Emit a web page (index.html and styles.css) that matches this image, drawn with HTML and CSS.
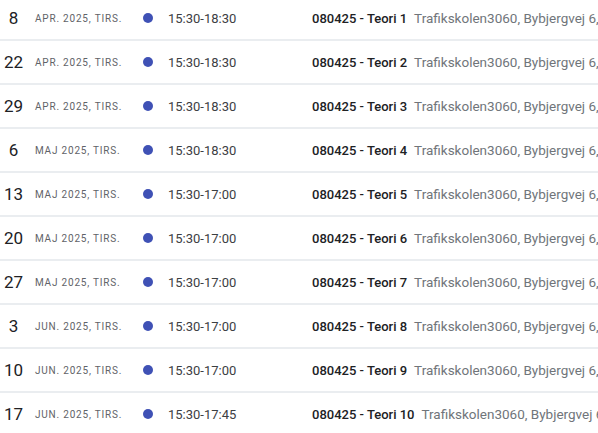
FILE: index.html
```html
<!DOCTYPE html>
<html lang="da">

<head>
    <meta charset="UTF-8">
    <meta name="viewport" content="width=device-width, initial-scale=1.0">
    <title>Agenda</title>
    <link rel="stylesheet" href="styles.css">
</head>

<body>
    <div class="agenda">
        <div class="row">
            <div class="day">8</div>
            <div class="month">Apr. 2025, tirs.</div>
            <span class="dot"></span>
            <div class="time">15:30-18:30</div>
            <div class="title">080425 - Teori 1</div>
            <div class="place">Trafikskolen3060, Bybjergvej 6, 3060 Espergærde</div>
        </div>
        <div class="row">
            <div class="day">22</div>
            <div class="month">Apr. 2025, tirs.</div>
            <span class="dot"></span>
            <div class="time">15:30-18:30</div>
            <div class="title">080425 - Teori 2</div>
            <div class="place">Trafikskolen3060, Bybjergvej 6, 3060 Espergærde</div>
        </div>
        <div class="row">
            <div class="day">29</div>
            <div class="month">Apr. 2025, tirs.</div>
            <span class="dot"></span>
            <div class="time">15:30-18:30</div>
            <div class="title">080425 - Teori 3</div>
            <div class="place">Trafikskolen3060, Bybjergvej 6, 3060 Espergærde</div>
        </div>
        <div class="row">
            <div class="day">6</div>
            <div class="month">Maj 2025, tirs.</div>
            <span class="dot"></span>
            <div class="time">15:30-18:30</div>
            <div class="title">080425 - Teori 4</div>
            <div class="place">Trafikskolen3060, Bybjergvej 6, 3060 Espergærde</div>
        </div>
        <div class="row">
            <div class="day">13</div>
            <div class="month">Maj 2025, tirs.</div>
            <span class="dot"></span>
            <div class="time">15:30-17:00</div>
            <div class="title">080425 - Teori 5</div>
            <div class="place">Trafikskolen3060, Bybjergvej 6, 3060 Espergærde</div>
        </div>
        <div class="row">
            <div class="day">20</div>
            <div class="month">Maj 2025, tirs.</div>
            <span class="dot"></span>
            <div class="time">15:30-17:00</div>
            <div class="title">080425 - Teori 6</div>
            <div class="place">Trafikskolen3060, Bybjergvej 6, 3060 Espergærde</div>
        </div>
        <div class="row">
            <div class="day">27</div>
            <div class="month">Maj 2025, tirs.</div>
            <span class="dot"></span>
            <div class="time">15:30-17:00</div>
            <div class="title">080425 - Teori 7</div>
            <div class="place">Trafikskolen3060, Bybjergvej 6, 3060 Espergærde</div>
        </div>
        <div class="row">
            <div class="day">3</div>
            <div class="month">Jun. 2025, tirs.</div>
            <span class="dot"></span>
            <div class="time">15:30-17:00</div>
            <div class="title">080425 - Teori 8</div>
            <div class="place">Trafikskolen3060, Bybjergvej 6, 3060 Espergærde</div>
        </div>
        <div class="row">
            <div class="day">10</div>
            <div class="month">Jun. 2025, tirs.</div>
            <span class="dot"></span>
            <div class="time">15:30-17:00</div>
            <div class="title">080425 - Teori 9</div>
            <div class="place">Trafikskolen3060, Bybjergvej 6, 3060 Espergærde</div>
        </div>
        <div class="row">
            <div class="day">17</div>
            <div class="month">Jun. 2025, tirs.</div>
            <span class="dot"></span>
            <div class="time">15:30-17:45</div>
            <div class="title">080425 - Teori 10</div>
            <div class="place">Trafikskolen3060, Bybjergvej 6, 3060 Espergærde</div>
        </div>
    </div>
</body>

</html>
```

FILE: styles.css
```css
body {
    font-family: Roboto, 'Liberation Sans', sans-serif;
    background: #ffffff;
    color: #3c4043;
    margin: 0;
    padding: 0;
    overflow: hidden;
}

.agenda {
    margin-top: -3px;
}

.row {
    display: flex;
    align-items: center;
    height: 42px;
    border-bottom: 2px solid #eaedf0;
    white-space: nowrap;
    overflow: hidden;
}

.day {
    width: 27px;
    text-align: center;
    font-size: 17px;
    color: #202124;
    flex-shrink: 0;
}

.month {
    width: 108px;
    margin-left: 8px;
    font-size: 10px;
    letter-spacing: 0.8px;
    text-transform: uppercase;
    color: #5f6368;
    flex-shrink: 0;
}

.dot {
    width: 10px;
    height: 10px;
    border-radius: 50%;
    background-color: #3f51b5;
    flex-shrink: 0;
}

.time {
    width: 144px;
    margin-left: 15px;
    font-size: 13px;
    color: #3c4043;
    flex-shrink: 0;
}

.title {
    font-size: 13px;
    font-weight: 500;
    color: #202124;
    margin-right: 7px;
    flex-shrink: 0;
}

.place {
    font-size: 13.5px;
    color: #70757a;
}
```
